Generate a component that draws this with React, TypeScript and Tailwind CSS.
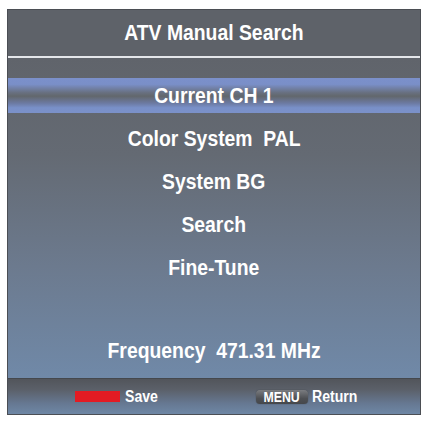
import React from 'react';

const ITEMS = ['Color System  PAL', 'System BG', 'Search', 'Fine-Tune'];

function Label({ children, className = '' }: { children: React.ReactNode; className?: string }) {
  return (
    <span className={`inline-block scale-x-[0.88] whitespace-pre font-bold text-white ${className}`}>
      {children}
    </span>
  );
}

export default function App() {
  return (
    <div className="w-[427px] h-[423px] bg-white pt-[9px] pl-[7px] font-['Liberation_Sans',Arial,sans-serif]">
      <div className="w-[414px] h-[406px] border border-[#4b4e54] flex flex-col overflow-hidden">
        {/* Header */}
        <div className="h-[46px] bg-[#5e6269] flex items-center justify-center">
          <Label className="text-[22px] leading-none">ATV Manual Search</Label>
        </div>
        <div className="h-[2px] bg-[#e4e6ea]" />

        {/* Body */}
        <div className="h-[320px] bg-[linear-gradient(to_bottom,#60646b_0%,#646a73_30%,#6c7a8e_65%,#7089a8_100%)] flex flex-col">
          <div className="h-[20px]" />
          <div className="h-[35px] flex items-center justify-center bg-[linear-gradient(to_bottom,#7b90cb_0%,#7a8fc8_18%,#687080_42%,#62676c_52%,#6c7aa2_72%,#7990c8_85%,#7b91c9_100%)]">
            <Label className="text-[22px] leading-none">Current CH 1</Label>
          </div>
          <div className="h-[4px]" />
          {ITEMS.map((t) => (
            <div key={t} className="h-[43px] flex items-center justify-center">
              <Label className="text-[22px] leading-none">{t}</Label>
            </div>
          ))}
          <div className="h-[40px]" />
          <div className="h-[43px] flex items-center justify-center">
            <Label className="text-[22px] leading-none">Frequency  471.31 MHz</Label>
          </div>
        </div>

        {/* Footer */}
        <div className="flex-1 border-t border-[#45484d] bg-[linear-gradient(to_bottom,#52555b_0%,#5b6069_30%,#667892_70%,#6e87a5_100%)] flex items-center">
          <div className="flex items-center ml-[67px]">
            <div className="w-[45px] h-[11px] bg-[#e31b23]" />
            <Label className="text-[16px] leading-none ml-[5px] origin-left">Save</Label>
          </div>
          <div className="flex items-center ml-[94px]">
            <div className="h-[14px] px-[5px] rounded-[4px] bg-[linear-gradient(to_bottom,#7a7c80,#4e5054_60%,#45474b)] flex items-center shadow-[0_0_1px_rgba(0,0,0,0.5)]">
              <Label className="text-[14px] leading-none text-[#eeeeee] origin-center">MENU</Label>
            </div>
            <Label className="text-[16px] leading-none ml-[4px] origin-left">Return</Label>
          </div>
        </div>
      </div>
    </div>
  );
}
